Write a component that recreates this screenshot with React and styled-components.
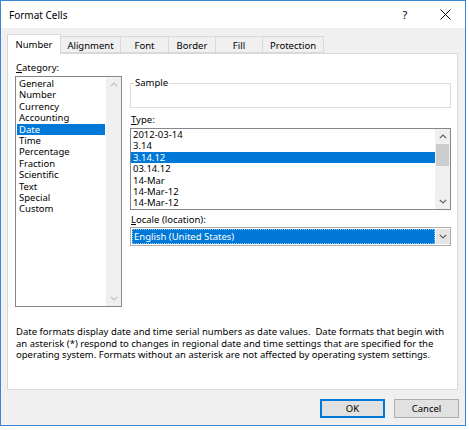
import React from "react";
import styled, { createGlobalStyle } from "styled-components";

const GlobalStyle = createGlobalStyle`
  html, body {
    margin: 0;
    padding: 0;
    background: #fff;
  }
  body {
    font-family: "Noto Sans", "Liberation Sans", sans-serif;
    font-size: 9.5px;
    color: #000;
  }
`;

const Window = styled.div`
  width: 466px;
  height: 426px;
  box-sizing: border-box;
  border: 1px solid #3a86d4;
  background: #f0f0f0;
  display: flex;
  flex-direction: column;
`;

const TitleBar = styled.div`
  height: 27px;
  background: #fff;
  display: flex;
  align-items: center;
  padding-left: 8px;
  flex-shrink: 0;
`;

const Title = styled.div`
  flex: 1;
  font-size: 10px;
`;

const TitleButton = styled.div`
  width: 40px;
  height: 27px;
  display: flex;
  align-items: center;
  justify-content: center;
  font-size: 11px;
`;

const Body = styled.div`
  flex: 1;
  display: flex;
  flex-direction: column;
  padding: 6px 6px 0 6px;
`;

const TabStrip = styled.div`
  display: flex;
  align-items: flex-end;
  height: 19px;
  position: relative;
  z-index: 1;
`;

const Tab = styled.div`
  box-sizing: border-box;
  width: ${(p) => p.$w}px;
  height: ${(p) => (p.$active ? 20 : 17)}px;
  margin-left: -1px;
  border: 1px solid #d9d9d9;
  border-bottom: ${(p) => (p.$active ? "none" : "1px solid #d9d9d9")};
  background: ${(p) => (p.$active ? "#fff" : "#f0f0f0")};
  display: flex;
  align-items: center;
  justify-content: center;
  padding-top: ${(p) => (p.$active ? 0 : 1)}px;
  margin-bottom: ${(p) => (p.$active ? -1 : 0)}px;
  &:first-child {
    margin-left: 0;
  }
`;

const Panel = styled.div`
  box-sizing: border-box;
  height: 337px;
  margin-right: 1px;
  background: #fff;
  border: 1px solid #d9d9d9;
  padding: 8px 5px 0 7px;
  display: flex;
  flex-direction: column;
`;

const Columns = styled.div`
  display: grid;
  grid-template-columns: 107px 321px;
  column-gap: 8px;
`;

const Column = styled.div`
  display: flex;
  flex-direction: column;
`;

const Label = styled.div`
  line-height: 12px;
  margin-top: ${(p) => p.$mt || 0}px;
  margin-bottom: ${(p) => p.$mb || 0}px;
  padding-left: 1px;
  u {
    text-decoration: underline;
    text-underline-offset: 1px;
  }
`;

const ListBox = styled.div`
  box-sizing: border-box;
  height: ${(p) => p.$h}px;
  border: 1px solid #828790;
  display: flex;
  background: #fff;
`;

const Items = styled.div`
  flex: 1;
  padding: ${(p) => p.$pad}px;
`;

const Item = styled.div`
  height: 11.4px;
  line-height: 11.4px;
  padding-left: 2px;
  white-space: nowrap;
  background: ${(p) => (p.$selected ? "#0078d7" : "transparent")};
  color: ${(p) => (p.$selected ? "#fff" : "#000")};
`;

const ScrollBar = styled.div`
  width: 15px;
  background: #f0f0f0;
  display: flex;
  flex-direction: column;
`;

const ScrollButton = styled.div`
  height: 15px;
  display: flex;
  align-items: center;
  justify-content: center;
  flex-shrink: 0;
`;

const Track = styled.div`
  flex: 1;
`;

const Thumb = styled.div`
  height: 22px;
  margin: 0 1px;
  background: #cdcdcd;
`;

const Group = styled.fieldset`
  margin: 15px 0 0 0;
  padding: 0;
  border: 1px solid #dcdcdc;
  legend {
    padding: 0 1px;
    margin-left: 3px;
    line-height: 12px;
  }
`;

const GroupBody = styled.div`
  height: 18px;
`;

const Combo = styled.div`
  box-sizing: border-box;
  height: 19px;
  border: 1px solid #adadad;
  background: #fff;
  display: flex;
  padding: 1px 0 1px 1px;
  gap: 1px;
`;

const ComboValue = styled.div`
  flex: 1;
  box-sizing: border-box;
  background: #0078d7;
  color: #fff;
  border: 1px dotted rgba(255, 255, 255, 0.55);
  line-height: 14px;
  padding-left: 1px;
`;

const ComboButton = styled.div`
  width: 14px;
  background: #e5e5e5;
  display: flex;
  align-items: center;
  justify-content: center;
`;

const Description = styled.div`
  margin-top: 19px;
  padding-left: 1px;
  line-height: 11.7px;
  width: 440px;
`;

const ButtonRow = styled.div`
  display: flex;
  justify-content: flex-end;
  gap: 9px;
  margin-top: 9px;
`;

const Button = styled.div`
  box-sizing: border-box;
  width: 65px;
  height: 19px;
  background: #e1e1e1;
  border: 1px solid ${(p) => (p.$default ? "#0078d7" : "#adadad")};
  box-shadow: ${(p) => (p.$default ? "inset 0 0 0 1px #0078d7" : "none")};
  display: flex;
  align-items: center;
  justify-content: center;
`;

const Chevron = ({ dir = "up", color = "#606060" }) => (
  <svg width="8" height="5" viewBox="0 0 8 5">
    <path
      d={dir === "up" ? "M0.8 4.2 L4 1 L7.2 4.2" : "M0.8 0.8 L4 4 L7.2 0.8"}
      fill="none"
      stroke={color}
      strokeWidth="1.2"
    />
  </svg>
);

const CloseIcon = () => (
  <svg width="11" height="11" viewBox="0 0 11 11">
    <path d="M0.5 0.5 L10.5 10.5 M10.5 0.5 L0.5 10.5" stroke="#000" strokeWidth="1" />
  </svg>
);

const tabs = [
  { name: "Number", w: 54 },
  { name: "Alignment", w: 61 },
  { name: "Font", w: 49 },
  { name: "Border", w: 48 },
  { name: "Fill", w: 48 },
  { name: "Protection", w: 62 },
];

const categories = [
  "General",
  "Number",
  "Currency",
  "Accounting",
  "Date",
  "Time",
  "Percentage",
  "Fraction",
  "Scientific",
  "Text",
  "Special",
  "Custom",
];

const types = [
  "2012-03-14",
  "3.14",
  "3.14.12",
  "03.14.12",
  "14-Mar",
  "14-Mar-12",
  "14-Mar-12",
];

export default function App() {
  return (
    <>
      <GlobalStyle />
      <Window>
        <TitleBar>
          <Title>Format Cells</Title>
          <TitleButton>?</TitleButton>
          <TitleButton>
            <CloseIcon />
          </TitleButton>
        </TitleBar>
        <Body>
          <TabStrip>
            {tabs.map((t, i) => (
              <Tab key={t.name} $w={t.w} $active={i === 0}>
                {t.name}
              </Tab>
            ))}
          </TabStrip>
          <Panel>
            <Columns>
              <Column>
                <Label $mb={2}>
                  <u>C</u>ategory:
                </Label>
                <ListBox $h={231}>
                  <Items $pad={1}>
                    {categories.map((c) => (
                      <Item key={c} $selected={c === "Date"}>
                        {c}
                      </Item>
                    ))}
                  </Items>
                  <ScrollBar>
                    <ScrollButton>
                      <Chevron dir="up" color="#bfbfbf" />
                    </ScrollButton>
                    <Track />
                    <ScrollButton>
                      <Chevron dir="down" color="#bfbfbf" />
                    </ScrollButton>
                  </ScrollBar>
                </ListBox>
              </Column>
              <Column>
                <Group>
                  <legend>Sample</legend>
                  <GroupBody />
                </Group>
                <Label $mt={6} $mb={2}>
                  <u>T</u>ype:
                </Label>
                <ListBox $h={82}>
                  <Items $pad={0}>
                    {types.map((t, i) => (
                      <Item key={i} $selected={i === 2}>
                        {t}
                      </Item>
                    ))}
                  </Items>
                  <ScrollBar>
                    <ScrollButton>
                      <Chevron dir="up" />
                    </ScrollButton>
                    <Track>
                      <Thumb />
                    </Track>
                    <ScrollButton>
                      <Chevron dir="down" />
                    </ScrollButton>
                  </ScrollBar>
                </ListBox>
                <Label $mt={4} $mb={1}>
                  <u>L</u>ocale (location):
                </Label>
                <Combo>
                  <ComboValue>English (United States)</ComboValue>
                  <ComboButton>
                    <Chevron dir="down" />
                  </ComboButton>
                </Combo>
              </Column>
            </Columns>
            <Description>
              Date formats display date and time serial numbers as date values.&nbsp; Date formats that begin with an
              asterisk (*) respond to changes in regional date and time settings that are specified for the operating
              system. Formats without an asterisk are not affected by operating system settings.
            </Description>
          </Panel>
          <ButtonRow>
            <Button $default>OK</Button>
            <Button>Cancel</Button>
          </ButtonRow>
        </Body>
      </Window>
    </>
  );
}
